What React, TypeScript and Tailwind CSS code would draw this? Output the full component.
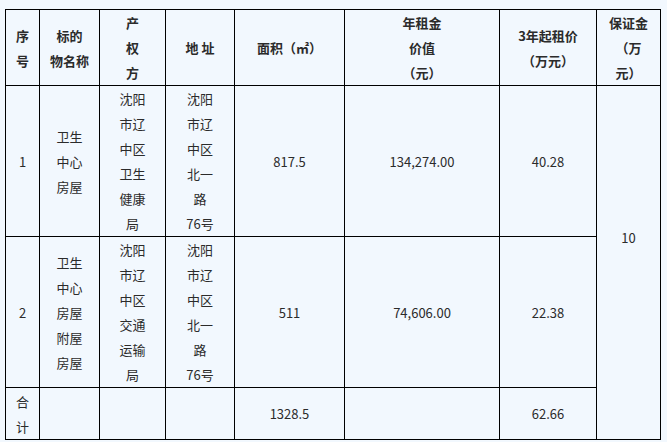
import React from "react";

const cell = "border border-black text-center align-middle p-0 leading-[25px]";

function Lines({ items }: { items: string[] }) {
  return (
    <>
      {items.map((t, i) => (
        <div key={i}>{t}</div>
      ))}
    </>
  );
}

export default function App() {
  return (
    <div
      className="w-[667px] h-[442px] bg-[#f2f8fe] pt-[9px] pl-[5px] text-[13px] text-[#2b2b2b]"
      style={{ fontFamily: '"Noto Sans CJK SC", "Noto Sans", sans-serif' }}
    >
      <table className="border-collapse table-fixed w-[655px]">
        <colgroup>
          <col className="w-[34px]" />
          <col className="w-[60px]" />
          <col className="w-[66px]" />
          <col className="w-[69px]" />
          <col className="w-[110px]" />
          <col className="w-[155px]" />
          <col className="w-[97px]" />
          <col className="w-[64px]" />
        </colgroup>
        <thead>
          <tr className="h-[76px] font-bold">
            <td className={cell}><Lines items={["序", "号"]} /></td>
            <td className={cell}><Lines items={["标的", "物名称"]} /></td>
            <td className={cell}><Lines items={["产", "权", "方"]} /></td>
            <td className={cell}>地 址</td>
            <td className={cell}>面积（㎡）</td>
            <td className={cell}><Lines items={["年租金", "价值", "（元）"]} /></td>
            <td className={cell}><Lines items={["3年起租价", "（万元）"]} /></td>
            <td className={cell}><Lines items={["保证金", "（万", "元）"]} /></td>
          </tr>
        </thead>
        <tbody>
          <tr className="h-[151px]">
            <td className={cell}>1</td>
            <td className={cell}><Lines items={["卫生", "中心", "房屋"]} /></td>
            <td className={cell}><Lines items={["沈阳", "市辽", "中区", "卫生", "健康", "局"]} /></td>
            <td className={cell}><Lines items={["沈阳", "市辽", "中区", "北一", "路", "76号"]} /></td>
            <td className={cell}>817.5</td>
            <td className={cell}>134,274.00</td>
            <td className={cell}>40.28</td>
            <td className={`${cell} pb-[50px]`} rowSpan={3}>10</td>
          </tr>
          <tr className="h-[151px]">
            <td className={cell}>2</td>
            <td className={cell}><Lines items={["卫生", "中心", "房屋", "附屋", "房屋"]} /></td>
            <td className={cell}><Lines items={["沈阳", "市辽", "中区", "交通", "运输", "局"]} /></td>
            <td className={cell}><Lines items={["沈阳", "市辽", "中区", "北一", "路", "76号"]} /></td>
            <td className={cell}>511</td>
            <td className={cell}>74,606.00</td>
            <td className={cell}>22.38</td>
          </tr>
          <tr className="h-[52px]">
            <td className={cell}><Lines items={["合", "计"]} /></td>
            <td className={cell}></td>
            <td className={cell}></td>
            <td className={cell}></td>
            <td className={cell}>1328.5</td>
            <td className={cell}></td>
            <td className={cell}>62.66</td>
          </tr>
        </tbody>
      </table>
    </div>
  );
}
